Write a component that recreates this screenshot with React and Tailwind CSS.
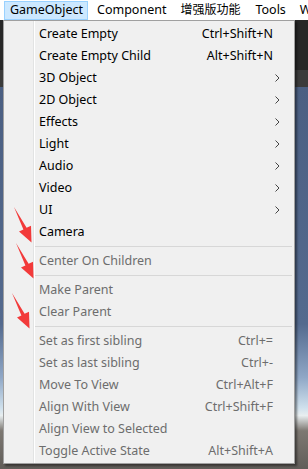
const font = { fontFamily: '"Noto Sans", "Noto Sans CJK SC", sans-serif' };

const groups = [
  [
    { label: "Create Empty", shortcut: "Ctrl+Shift+N" },
    { label: "Create Empty Child", shortcut: "Alt+Shift+N" },
    { label: "3D Object", sub: true },
    { label: "2D Object", sub: true },
    { label: "Effects", sub: true },
    { label: "Light", sub: true },
    { label: "Audio", sub: true },
    { label: "Video", sub: true },
    { label: "UI", sub: true },
    { label: "Camera" },
  ],
  [{ label: "Center On Children", disabled: true }],
  [
    { label: "Make Parent", disabled: true },
    { label: "Clear Parent", disabled: true },
  ],
  [
    { label: "Set as first sibling", shortcut: "Ctrl+=", disabled: true },
    { label: "Set as last sibling", shortcut: "Ctrl+-", disabled: true },
    { label: "Move To View", shortcut: "Ctrl+Alt+F", disabled: true },
    { label: "Align With View", shortcut: "Ctrl+Shift+F", disabled: true },
    { label: "Align View to Selected", disabled: true },
    { label: "Toggle Active State", shortcut: "Alt+Shift+A", disabled: true },
  ],
];

function Chevron() {
  return (
    <svg width="5" height="8" viewBox="0 0 5 8" className="shrink-0">
      <path d="M0.5 0.5 L4 4 L0.5 7.5" fill="none" stroke="#444" strokeWidth="1" />
    </svg>
  );
}

function Arrow({ className }) {
  // red annotation arrow pointing down-right
  return (
    <svg width="20" height="36" viewBox="0 0 20 36" className={className}>
      <path d="M1 0 L10.4 22.6 L6 24.6 L18.5 35.5 L18 18.8 L13.6 20.8 Z" fill="#f23a3a" />
    </svg>
  );
}

function Item({ item }) {
  return (
    <div
      className={`h-[22px] flex items-center pl-[35px] pr-[14px] text-[12.5px] ${
        item.disabled ? "text-[#6d6d6d]" : "text-black"
      }`}
    >
      <span className="flex-1 whitespace-nowrap">{item.label}</span>
      {item.shortcut && <span className="whitespace-nowrap mr-[7px]">{item.shortcut}</span>}
      {item.sub && <Chevron />}
    </div>
  );
}

export default function App() {
  return (
    <div className="relative w-[308px] h-[469px] overflow-hidden" style={font}>
      {/* menu bar */}
      <div className="h-[20px] bg-white flex items-center text-[12px] text-black whitespace-nowrap">
        <div className="ml-[4px] h-[19px] mt-[1px] w-[84px] shrink-0 bg-[#cce8ff] border border-[#99d1ff] flex items-center pl-[5px] text-[12.5px]">
          GameObject
        </div>
        <span className="ml-[9px] shrink-0 text-[12.5px]">Component</span>
        <span className="ml-[14px] shrink-0">增强版功能</span>
        <span className="ml-[15px] shrink-0 text-[12.5px]">Tools</span>
        <span className="ml-[14px] shrink-0 text-[12.5px]">W</span>
      </div>

      {/* scene behind */}
      <div className="flex flex-col h-[449px]">
        <div className="h-[50px] bg-[#272727]" />
        <div className="h-[17px] bg-[#3b3b3b]" />
        <div className="flex-1 bg-[linear-gradient(#4b5f82_0%,#546a8e_62%,#8fa7c6_76%,#cfe0ec_84%,#e8eef0_86%,#7d7872_90%,#615d59_100%)]" />
      </div>

      {/* dropdown */}
      <div className="absolute left-[3px] top-[20px] w-[292px] bg-[#f0f0f0] border border-[#a0a0a0] shadow-[2px_2px_2px_rgba(0,0,0,0.45)] pt-[2px] pb-[1px]">
        <div className="absolute left-[29px] top-0 bottom-0 w-px bg-[#e2e3e3]" />
        <div className="absolute left-[30px] top-0 bottom-0 w-px bg-white" />
        {groups.map((g, gi) => (
          <div key={gi}>
            {gi > 0 && (
              <div className="h-[7px] flex items-center pl-[31px] pr-[2px]">
                <div className="h-px w-full bg-[#d7d7d7]" />
              </div>
            )}
            {g.map((item) => (
              <Item key={item.label} item={item} />
            ))}
          </div>
        ))}
      </div>

      {/* annotation arrows */}
      <Arrow className="absolute left-[13px] top-[207px]" />
      <Arrow className="absolute left-[15px] top-[243px]" />
      <Arrow className="absolute left-[11px] top-[293px]" />
    </div>
  );
}
